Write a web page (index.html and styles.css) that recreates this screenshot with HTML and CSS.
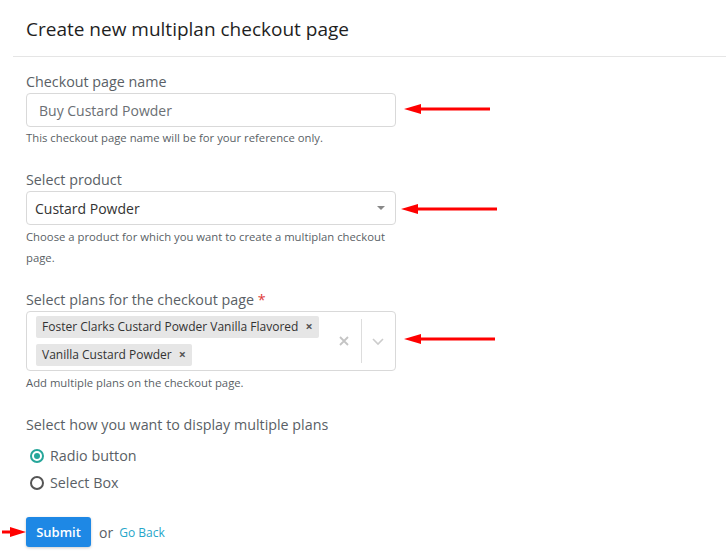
FILE: index.html
```html
<!DOCTYPE html>
<html>
<head>
<meta charset="utf-8">
<link rel="stylesheet" href="styles.css">
</head>
<body>
<div class="page">
  <header class="head">
    <h1 class="title">Create new multiplan checkout page</h1>
  </header>
  <form class="form">
    <div class="field f-name">
      <label class="label">Checkout page name</label>
      <div class="input">Buy Custard Powder</div>
      <p class="help">This checkout page name will be for your reference only.</p>
    </div>
    <div class="field f-product">
      <label class="label">Select product</label>
      <div class="select">
        <span class="select-val">Custard Powder</span>
        <span class="caret"></span>
      </div>
      <p class="help help-wrap">Choose a product for which you want to create a multiplan checkout page.</p>
    </div>
    <div class="field f-plans">
      <label class="label">Select plans for the checkout page <span class="req">*</span></label>
      <div class="multi">
        <div class="tags">
          <span class="tag">Foster Clarks Custard Powder Vanilla Flavored <span class="tag-x">×</span></span>
          <span class="tag">Vanilla Custard Powder <span class="tag-x">×</span></span>
        </div>
        <div class="indicators">
          <svg class="clear" width="12" height="12" viewBox="0 0 12 12"><path d="M2 2L10 10M10 2L2 10" stroke="#c4c4c4" stroke-width="1.8" fill="none"/></svg>
          <span class="sep"></span>
          <svg class="chev" width="14" height="10" viewBox="0 0 14 10"><path d="M2 3L7 8L12 3" stroke="#cccccc" stroke-width="1.6" fill="none"/></svg>
        </div>
      </div>
      <p class="help">Add multiple plans on the checkout page.</p>
    </div>
    <div class="field f-display">
      <label class="label">Select how you want to display multiple plans</label>
      <div class="radios">
        <div class="radio"><span class="dot on"></span>Radio button</div>
        <div class="radio"><span class="dot"></span>Select Box</div>
      </div>
    </div>
    <div class="actions">
      <button type="button" class="btn">Submit</button>
      <span class="or">or</span>
      <a class="back">Go Back</a>
    </div>
  </form>

  <svg class="arrow a1" width="90" height="12" viewBox="0 0 90 12"><path d="M16 6H86" stroke="#f00" stroke-width="3"/><path d="M0 6L17 1V11Z" fill="#f00"/></svg>
  <svg class="arrow a2" width="98" height="12" viewBox="0 0 98 12"><path d="M16 6H96" stroke="#f00" stroke-width="3"/><path d="M0 6L17 1V11Z" fill="#f00"/></svg>
  <svg class="arrow a3" width="92" height="12" viewBox="0 0 92 12"><path d="M16 6H91" stroke="#f00" stroke-width="3"/><path d="M0 6L17 1V11Z" fill="#f00"/></svg>
  <svg class="arrow a4" width="24" height="12" viewBox="0 0 24 12"><path d="M0 6H10" stroke="#f00" stroke-width="3"/><path d="M24 6L8 1V11Z" fill="#f00"/></svg>
</div>
</body>
</html>
```
FILE: styles.css
```css
* { box-sizing: border-box; }
html, body { margin: 0; padding: 0; background: #fff; }
body { font-family: "Open Sans", "Segoe UI", sans-serif; color: #333; }
.page { position: relative; width: 726px; height: 554px; overflow: hidden; }
.head { margin-left: 13px; border-bottom: 1px solid #e5e5e5; height: 57px; padding: 16px 0 0 13px; }
.title { margin: 0; font-size: 19px; font-weight: 400; color: #1f1f1f; line-height: 26px; }
.form { padding: 16px 0 0 26px; width: 396px; }
.label { display: block; font-size: 14.3px; color: #5a5f66; line-height: 18px; margin-bottom: 2px; }
.req { color: #e03b3b; }
.input, .select { height: 34px; border: 1px solid #d9d9d9; border-radius: 4px; display: flex; align-items: center; font-size: 14px; }
.input { padding-left: 12px; color: #6b6f74; }
.select { padding: 0 8px; color: #333; justify-content: space-between; }
.caret { width: 0; height: 0; border-left: 4px solid transparent; border-right: 4px solid transparent; border-top: 4px solid #888; margin-right: 2px; }
.help { margin: 1px 0 0; font-size: 11.3px; color: #5a5f66; line-height: 21px; }
.f-name .help { margin-top: 2px; line-height: 18px; }
.f-product { margin-top: 24px; }
.f-plans { margin-top: 23px; }
.f-display { margin-top: 24px; }
.multi { border: 1px solid #d9d9d9; border-radius: 4px; display: flex; min-height: 60px; }
.tags { flex: 1; display: flex; flex-direction: column; align-items: flex-start; gap: 6px; padding: 4px 0 4px 9px; }
.tag { background: #e6e6e6; border-radius: 2px; font-size: 12px; color: #333; height: 22px; line-height: 22px; padding: 0 6px; }
.tag-x { font-size: 12.5px; color: #555; margin-left: 4px; font-weight: 700; }
.indicators { display: flex; align-items: center; }
.clear { margin-right: 11px; }
.sep { width: 1px; height: 44px; background: #ddd; }
.chev { margin: 0 10px 0 9px; }
.f-plans .help { margin-top: 3px; line-height: 18px; }
.radios { margin-top: 8px; padding-left: 4px; }
.radio { display: flex; align-items: center; font-size: 14.3px; color: #5a5f66; height: 27px; }
.dot { width: 14px; height: 14px; border-radius: 50%; border: 2px solid #555; margin-right: 6px; position: relative; }
.dot.on { border-color: #26a69a; }
.dot.on::after { content: ""; position: absolute; left: 2px; top: 2px; width: 6px; height: 6px; border-radius: 50%; background: #26a69a; }
.actions { margin-top: 21px; display: flex; align-items: center; }
.btn { font-family: inherit; background: #1e88e5; color: #fff; border: 0; border-radius: 3px; height: 30px; width: 65px; font-size: 13px; font-weight: 600; box-shadow: 0 1px 3px rgba(0,0,0,0.2); }
.or { font-size: 14px; color: #5a5f66; margin-left: 8px; }
.back { font-size: 12px; color: #26a6c9; margin-left: 6px; }
.arrow { position: absolute; }
.a1 { left: 404px; top: 103px; }
.a2 { left: 401px; top: 203px; }
.a3 { left: 404px; top: 333px; }
.a4 { left: 2px; top: 526px; }
```
